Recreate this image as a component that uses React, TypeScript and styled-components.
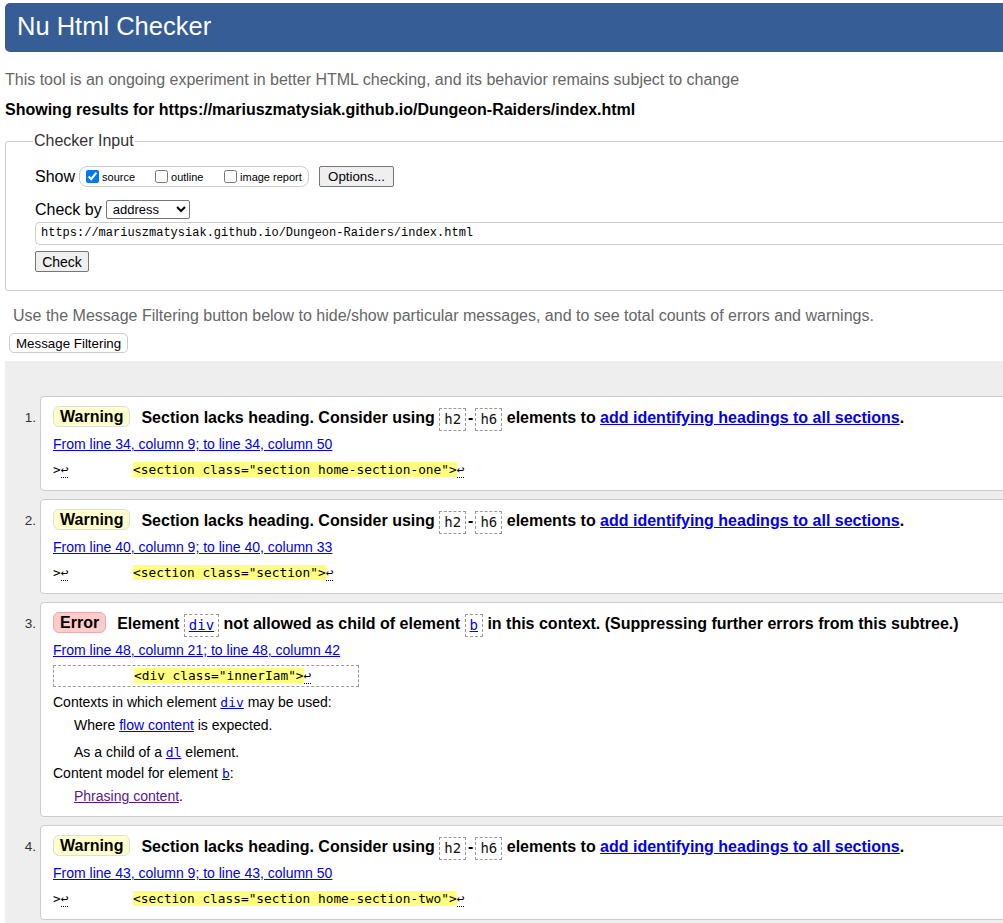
import React from "react";
import styled, { createGlobalStyle } from "styled-components";

const Global = createGlobalStyle`
  html, body { margin: 0; padding: 0; background: #fff; overflow: hidden; }
  body { font-family: "Liberation Sans", Arial, sans-serif; color: #000; }
`;

const Page = styled.div`
  width: 1060px;
  padding: 3px 0 0 5px;
`;

const Header = styled.h1`
  margin: 0;
  height: 49px;
  background: #365d95;
  border-radius: 5px;
  color: #fff;
  font-weight: normal;
  font-size: 25.5px;
  line-height: 47px;
  padding-left: 12px;
`;

const Intro = styled.p`
  margin: 19px 0 0;
  font-size: 16px;
  line-height: 18px;
  color: #666;
`;

const Showing = styled.p`
  margin: 12px 0 0;
  font-size: 16px;
  line-height: 18px;
  font-weight: bold;
`;

const Fieldset = styled.fieldset`
  margin: 13px 0 0;
  border: 1px solid #ccc;
  border-radius: 3px;
  padding: 16px 0 18px 29px;
`;

const Legend = styled.legend`
  font-size: 16px;
  color: #333;
  padding: 0 1px;
  margin-left: -2px;
  line-height: 18px;
`;

const Row = styled.div<{ $gap?: number }>`
  display: flex;
  align-items: center;
  margin-top: ${(p) => p.$gap ?? 0}px;
  font-size: 16px;
`;

const Label = styled.span`
  margin-right: 4px;
`;

const CheckGroup = styled.span`
  display: inline-flex;
  align-items: center;
  height: 19px;
  border: 1px solid #ccc;
  border-radius: 8px;
  padding: 0 6px 0 6px;
  margin-right: 10px;
`;

const CheckLabel = styled.label<{ $w: number }>`
  display: inline-flex;
  align-items: center;
  width: ${(p) => p.$w}px;
  font-size: 11px;
  input { margin: 0 3px 0 0; width: 13px; height: 13px; }
`;

const Button = styled.button`
  font-family: "Liberation Sans", Arial, sans-serif;
  font-size: 13.3px;
  background: #efefef;
  border: 1px solid #767676;
  border-radius: 2px;
  padding: 1px 6px;
  height: 21px;
  color: #000;
`;

const OptionsButton = styled(Button)`
  width: 75px;
`;

const Select = styled.select`
  font-family: "Liberation Sans", Arial, sans-serif;
  font-size: 13px;
  width: 84px;
  height: 19px;
  border: 1px solid #767676;
  border-radius: 2px;
  padding: 0 2px;
  background: #fff;
  color: #000;
`;

const UrlInput = styled.div`
  margin-top: 3px;
  height: 21px;
  border: 1px solid #ccc;
  border-right: none;
  border-radius: 5px 0 0 5px;
  font-family: "Liberation Mono", monospace;
  font-size: 12px;
  line-height: 21px;
  padding-left: 5px;
`;

const CheckButton = styled(Button)`
  margin-top: 6px;
  font-size: 14px;
  width: 54px;
  height: 21px;
  padding: 0;
`;

const Hint = styled.p`
  margin: 16px 0 0 8px;
  font-size: 16px;
  line-height: 18px;
  color: #666;
`;

const FilterButton = styled.button`
  margin: 8px 0 0 4px;
  font-family: "Liberation Sans", Arial, sans-serif;
  font-size: 13.33px;
  background: #fff;
  border: 1px solid #ccc;
  border-radius: 5px;
  height: 20px;
  padding: 0 6px;
  color: #000;
`;

const Results = styled.div`
  margin-top: 8px;
  background: #eee;
  padding: 35px 0 20px;
  display: flex;
  flex-direction: column;
  gap: 8px;
`;

const Item = styled.div`
  display: flex;
  align-items: flex-start;
`;

const Num = styled.span`
  width: 35px;
  text-align: right;
  padding-right: 4px;
  box-sizing: border-box;
  font-size: 13.5px;
  color: #333;
  line-height: 24px;
  margin-top: 10px;
`;

const Box = styled.div<{ $bottom?: number }>`
  flex: 1;
  background: #fff;
  border: 1px solid #ccc;
  border-radius: 4px;
  padding: 9px 12px ${(p) => p.$bottom ?? 10}px;
`;

const Headline = styled.p`
  margin: 0;
  font-size: 16px;
  font-weight: bold;
  line-height: 24px;
  white-space: nowrap;
`;

const Badge = styled.span<{ $error?: boolean }>`
  display: inline-block;
  box-sizing: border-box;
  height: 21px;
  line-height: 19px;
  padding: 0 6px;
  margin-right: 11px;
  border-radius: 6px;
  border: 1px solid ${(p) => (p.$error ? "#e8aaaa" : "#ddd")};
  background: ${(p) => (p.$error ? "#fcc" : "#ffc")};
  vertical-align: 1px;
`;

const Code = styled.code`
  display: inline-block;
  font-family: "DejaVu Sans Mono", monospace;
  font-weight: normal;
  font-size: 14px;
  line-height: 21px;
  border: 1px dashed #999;
  padding: 0 4px;
  color: #111;
  vertical-align: -1px;
`;

const Dash = styled.span`
  margin: 0 2px;
`;

const CodeLink = styled.a`
  color: #00e;
  text-decoration: underline;
`;

const Link = styled.a<{ $visited?: boolean }>`
  color: ${(p) => (p.$visited ? "#551a8b" : "#00e")};
  text-decoration: underline;
`;

const Location = styled.p`
  margin: 5px 0 0;
  font-size: 14px;
  line-height: 17px;
`;

const Extract = styled.p<{ $boxed?: boolean; $w?: number }>`
  margin: ${(p) => (p.$boxed ? 6 : 7)}px 0 0;
  font-family: "DejaVu Sans Mono", monospace;
  font-size: 12.8px;
  line-height: 20px;
  white-space: pre;
  ${(p) =>
    p.$boxed
      ? `display: inline-block; border: 1px dashed #999; width: ${p.$w}px; height: 22px; box-sizing: border-box; line-height: 20px;`
      : ""}
`;

const Mark = styled.mark`
  background: #ffff80;
  color: #000;
  margin-left: 3px;
`;

const Ret = styled.b`
  font-weight: normal;
  border-bottom: 1px dotted #000;
`;

const Text = styled.p<{ $indent?: boolean; $gap?: number }>`
  margin: ${(p) => p.$gap ?? 0}px 0 0 ${(p) => (p.$indent ? "21px" : "0")};
  font-size: 14px;
  line-height: 18px;
`;

const InlineCodeLink = styled.a`
  font-family: "DejaVu Sans Mono", monospace;
  font-size: 13px;
  color: #00e;
  text-decoration: underline;
`;

type Warn = { n: number; loc: string; src: string };

const WarningItem = ({ n, loc, src }: Warn) => (
  <Item>
    <Num>{n}.</Num>
    <Box>
      <Headline>
        <Badge>Warning</Badge>
        Section lacks heading. Consider using <Code>h2</Code>
        <Dash>-</Dash>
        <Code>h6</Code> elements to{" "}
        <Link href="#">add identifying headings to all sections</Link>.
      </Headline>
      <Location>
        <Link href="#">{loc}</Link>
      </Location>
      <Extract>
        {">"}
        <Ret>↩</Ret>
        {"        "}
        <Mark>{src}</Mark>
        <Ret>↩</Ret>
      </Extract>
    </Box>
  </Item>
);

export default function App() {
  return (
    <Page>
      <Global />
      <Header>Nu Html Checker</Header>
      <Intro>
        This tool is an ongoing experiment in better HTML checking, and its behavior remains subject to change
      </Intro>
      <Showing>Showing results for https://mariuszmatysiak.github.io/Dungeon-Raiders/index.html</Showing>
      <Fieldset>
        <Legend>Checker Input</Legend>
        <Row>
          <Label>Show</Label>
          <CheckGroup>
            <CheckLabel $w={69}>
              <input type="checkbox" defaultChecked />
              source
            </CheckLabel>
            <CheckLabel $w={69}>
              <input type="checkbox" />
              outline
            </CheckLabel>
            <CheckLabel $w={78}>
              <input type="checkbox" />
              image report
            </CheckLabel>
          </CheckGroup>
          <OptionsButton>Options...</OptionsButton>
        </Row>
        <Row $gap={13}>
          <Label>Check by</Label>
          <Select defaultValue="address">
            <option value="address">address</option>
          </Select>
        </Row>
        <UrlInput>https://mariuszmatysiak.github.io/Dungeon-Raiders/index.html</UrlInput>
        <CheckButton>Check</CheckButton>
      </Fieldset>
      <Hint>
        Use the Message Filtering button below to hide/show particular messages, and to see total counts of errors and warnings.
      </Hint>
      <FilterButton>Message Filtering</FilterButton>
      <Results>
        <WarningItem
          n={1}
          loc="From line 34, column 9; to line 34, column 50"
          src={'<section class="section home-section-one">'}
        />
        <WarningItem
          n={2}
          loc="From line 40, column 9; to line 40, column 33"
          src={'<section class="section">'}
        />
        <Item>
          <Num>3.</Num>
          <Box $bottom={11}>
            <Headline>
              <Badge $error>Error</Badge>
              Element{" "}
              <Code>
                <CodeLink href="#">div</CodeLink>
              </Code>{" "}
              not allowed as child of element{" "}
              <Code>
                <CodeLink href="#">b</CodeLink>
              </Code>{" "}
              in this context. (Suppressing further errors from this subtree.)
            </Headline>
            <Location>
              <Link href="#">From line 48, column 21; to line 48, column 42</Link>
            </Location>
            <Extract $boxed $w={306}>
              {"          "}
              <Mark>{'<div class="innerIam">'}</Mark>
              <Ret>↩</Ret>
            </Extract>
            <Text $gap={6}>
              Contexts in which element <InlineCodeLink href="#">div</InlineCodeLink> may be used:
            </Text>
            <Text $indent $gap={4}>
              Where <Link href="#">flow content</Link> is expected.
            </Text>
            <Text $indent $gap={9}>
              As a child of a <InlineCodeLink href="#">dl</InlineCodeLink> element.
            </Text>
            <Text $gap={2}>
              Content model for element <InlineCodeLink href="#">b</InlineCodeLink>:
            </Text>
            <Text $indent $gap={4}>
              <Link href="#" $visited>
                Phrasing content
              </Link>
              .
            </Text>
          </Box>
        </Item>
        <WarningItem
          n={4}
          loc="From line 43, column 9; to line 43, column 50"
          src={'<section class="section home-section-two">'}
        />
      </Results>
    </Page>
  );
}
